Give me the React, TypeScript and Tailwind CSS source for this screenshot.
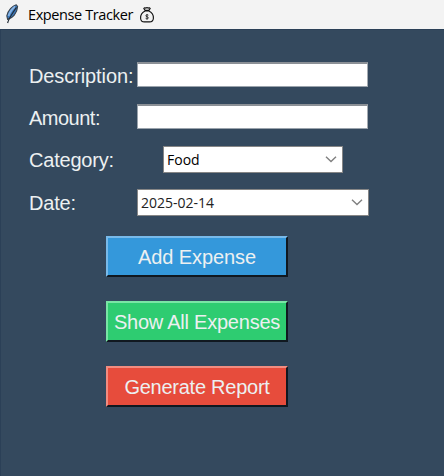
import type { ReactNode } from "react";

function Feather() {
  return (
    <svg className="h-[20px] w-[14px]" viewBox="0 0 14 20" fill="none">
      <path d="M11.2 0.8 C7.4 1.8 3 6.6 1.8 11.8 L2.6 15.4 C7.4 14.4 12.2 9.4 12.6 2.4 Z" fill="#3a78bd" stroke="#3b444e" strokeWidth="1.1" />
      <path d="M10.2 2.6 C7 4.8 4.6 8.4 3.6 12" stroke="#86b4e6" strokeWidth="1.9" />
      <path d="M11.4 3.4 C8.6 8 4.4 12.6 2.6 19" stroke="#222a33" strokeWidth="1.2" />
    </svg>
  );
}

function MoneyBag() {
  return (
    <svg className="h-[18px] w-[16px]" viewBox="0 0 16 18" fill="none" stroke="#111" strokeWidth="1.15">
      <path d="M6.2 4.4 L4.8 2.6 Q5.8 1.2 6.8 2.1 Q8 1 9.2 2.1 Q10.2 1.2 11.2 2.6 L9.8 4.4 Z" />
      <path d="M6 5 H10 C13 6.6 14.6 9 14.4 12.2 C14.2 14.8 12.8 15.9 10.6 15.9 H5.4 C3.2 15.9 1.8 14.8 1.6 12.2 C1.4 9 3 6.6 6 5 Z" />
      <path d="M9.4 9.2 C8.6 8.5 6.8 8.7 6.8 9.8 C6.8 11 9.4 10.5 9.4 11.9 C9.4 13 7.4 13.1 6.6 12.3 M8 8 V13.6" strokeWidth="0.8" />
    </svg>
  );
}

function Chevron() {
  return (
    <svg className="h-[7px] w-[12px]" viewBox="0 0 12 7" fill="none" stroke="#808080" strokeWidth="1.4">
      <path d="M1 0.8 L6 5.6 L11 0.8" />
    </svg>
  );
}

function Row({ label, labelClass, children }: { label: string; labelClass: string; children: ReactNode }) {
  return (
    <div className="flex h-[42.3px] items-start">
      <div className="w-[108px] shrink-0 whitespace-nowrap pt-px text-[20px] leading-[26px] text-[#ecf0f1]">
        <span className={labelClass}>{label}</span>
      </div>
      {children}
    </div>
  );
}

function Entry() {
  return (
    <div className="h-[25px] w-[231px] border border-t-2 border-[#9aa3ac] border-t-[#8b9096] border-r-[#a5abb1] bg-white" />
  );
}

function Select({ value, textClass, className }: { value: string; textClass: string; className: string }) {
  return (
    <div className={"flex h-[27px] items-center justify-between border border-[#868686] bg-white pl-[3px] pr-[5px] font-['Open_Sans','Noto_Sans',sans-serif] text-[14px] " + className}>
      <span className={textClass}>{value}</span>
      <Chevron />
    </div>
  );
}

function Button({ label, className }: { label: string; className: string }) {
  return (
    <button className={"flex h-[41px] w-[182px] items-center justify-center whitespace-nowrap border-2 border-b-[#101820] border-r-[#101820] pt-[2px] text-[20px] leading-none text-[#ecf0f1] " + className}>
      {label}
    </button>
  );
}

export default function App() {
  return (
    <div className="flex h-[476px] w-[444px] flex-col overflow-hidden bg-[#34495e] font-['Liberation_Sans',Arial,sans-serif]">
      <header className="flex h-[29px] shrink-0 items-center bg-[#f3f3f3] pl-[5px]">
        <span className="-mt-px"><Feather /></span>
        <span className="ml-[9px] whitespace-nowrap font-['Open_Sans','Noto_Sans',sans-serif] text-[14.5px] tracking-[-0.4px] text-black">Expense Tracker</span>
        <span className="ml-[6px]"><MoneyBag /></span>
      </header>
      <main className="grow border-l border-t border-[#2b4057] pl-[28px] pt-[31.8px]">
        <Row label="Description:" labelClass="tracking-[-0.1px]"><Entry /></Row>
        <Row label="Amount:" labelClass="tracking-[-0.5px]"><Entry /></Row>
        <Row label="Category:" labelClass="tracking-[-0.2px]"><Select value="Food" textClass="text-black" className="ml-[26px] w-[180px]" /></Row>
        <Row label="Date:" labelClass="tracking-[-0.2px]"><Select value="2025-02-14" textClass="text-[#222]" className="w-[232px]" /></Row>
        <div className="ml-[77px] mt-[5px] flex flex-col gap-[24px]">
          <Button label="Add Expense" className="border-l-[#78baea] border-t-[#78baea] bg-[#3498db] tracking-[-0.1px]" />
          <Button label="Show All Expenses" className="border-l-[#79e5a5] border-t-[#79e5a5] bg-[#2ecc71] tracking-[-0.23px]" />
          <Button label="Generate Report" className="border-l-[#f28c80] border-t-[#f28c80] bg-[#e74c3c] tracking-[-0.25px]" />
        </div>
      </main>
    </div>
  );
}
